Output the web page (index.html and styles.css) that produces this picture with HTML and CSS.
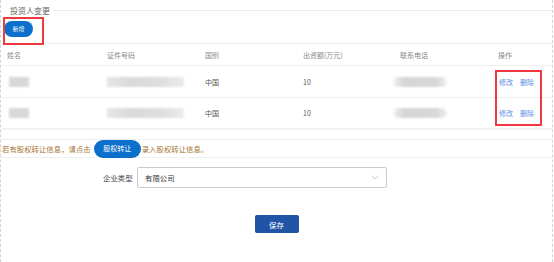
FILE: index.html
```html
<!DOCTYPE html>
<html lang="zh-CN">

<head>
    <meta charset="UTF-8">
    <meta name="viewport" content="width=device-width, initial-scale=1.0">
    <title>投资人变更</title>
    <link rel="stylesheet" href="styles.css">
</head>

<body>

    <div class="page">
        <!-- Legend -->
        <div class="legend-row">
            <span class="legend">投资人变更</span>
            <span class="legend-line"></span>
        </div>

        <div class="toolbar">
            <button class="btn-pill btn-add">新增</button>
            <span class="mark mark-add"></span>
        </div>

        <!-- Investor table -->
        <div class="table">
            <div class="tr th">
                <div>姓名</div>
                <div>证件号码</div>
                <div>国别</div>
                <div>出资额(万元)</div>
                <div>联系电话</div>
                <div>操作</div>
            </div>
            <div class="tr">
                <div><span class="blur blur-name"></span></div>
                <div><span class="blur blur-id"></span></div>
                <div>中国</div>
                <div>10</div>
                <div><span class="blur blur-phone"></span></div>
                <div class="ops"><a href="#">修改</a><a href="#">删除</a></div>
            </div>
            <div class="tr">
                <div><span class="blur blur-name"></span></div>
                <div><span class="blur blur-id"></span></div>
                <div>中国</div>
                <div>10</div>
                <div><span class="blur blur-phone"></span></div>
                <div class="ops"><a href="#">修改</a><a href="#">删除</a></div>
            </div>
            <span class="mark mark-ops"></span>
        </div>

        <div class="notice">
            若有股权转让信息，请点击<button class="btn-pill btn-transfer">股权转让</button>录入股权转让信息。
        </div>

        <div class="form-row">
            <label for="companyType">企业类型</label>
            <div class="select">
                <span>有限公司</span>
                <svg width="8" height="5" viewBox="0 0 8 5"><path d="M0.5 0.5 L4 4 L7.5 0.5" fill="none" stroke="#bbb" stroke-width="0.8"/></svg>
            </div>
        </div>

        <div class="actions">
            <button class="btn-save">保存</button>
        </div>
    </div>

</body>

</html>
```

FILE: styles.css
```css
/* Global */
* {
    margin: 0;
    padding: 0;
    box-sizing: border-box;
}

body {
    font-family: "Noto Sans CJK SC", "Noto Sans", sans-serif;
    background-color: #fff;
    color: #333;
}

.page {
    width: 553px;
    height: 262px;
    border-left: 1px dashed #d4d4d4;
    border-right: 1px dashed #d4d4d4;
}

/* Legend */
.legend-row {
    display: flex;
    align-items: center;
    height: 21px;
    padding-left: 9px;
}

.legend {
    font-size: 8px;
    color: #666;
    line-height: 1;
    margin-right: 3px;
}

.legend-line {
    flex: 1;
    height: 1px;
    background-color: #ececec;
}

/* Toolbar */
.toolbar {
    position: relative;
    display: flex;
    align-items: flex-start;
    height: 23px;
    padding-left: 3px;
    border-bottom: 1px solid #eee;
}

.btn-pill {
    border: none;
    background-color: #0b6fcc;
    color: #fff;
    font-family: inherit;
    line-height: 1;
    cursor: pointer;
}

.btn-add {
    width: 29px;
    height: 16px;
    border-radius: 8px;
    font-size: 6px;
}

.mark {
    position: absolute;
    border: 2px solid #ee3a3f;
}

.mark-add {
    left: 2px;
    top: -4px;
    width: 41px;
    height: 28px;
}

/* Table */
.table {
    position: relative;
}

.tr {
    display: grid;
    grid-template-columns: 100px 98px 98px 97px 98px 1fr;
    align-items: center;
    height: 32px;
    padding-left: 6px;
    border-bottom: 1px solid #efefef;
    font-size: 7px;
    color: #555;
}

.tr.th {
    height: 22px;
    color: #888;
}

.tr:last-of-type {
    height: 32px;
    border-bottom: 2px solid #f2f2f2;
}

.blur {
    display: block;
    height: 10px;
    background-color: #d8d8d8;
    filter: blur(1px);
}

.blur-name {
    width: 20px;
    margin-left: 2px;
}

.blur-id {
    width: 77px;
    background: linear-gradient(90deg, #e6e6e6, #d9d9d9 30%, #dedede 70%, #ececec);
}

.blur-phone {
    width: 54px;
    margin-left: -7px;
    border-radius: 5px;
    background: linear-gradient(90deg, #f2f2f2, #d6d6d6 20%, #d8d8d8 80%, #f0f0f0);
}

.ops {
    display: flex;
    gap: 7px;
    padding-left: 1px;
}

.ops a {
    color: #5b8de6;
    text-decoration: none;
}

.mark-ops {
    left: 494px;
    top: 26px;
    width: 47px;
    height: 56px;
}

/* Notice */
.notice {
    display: flex;
    align-items: center;
    height: 19px;
    margin-top: 9px;
    padding-left: 1px;
    border-top: 1px solid #efefef;
    border-bottom: 1px solid #efefef;
    font-size: 7.4px;
    color: #a87634;
}

.btn-transfer {
    width: 47px;
    height: 18px;
    border-radius: 9px;
    font-size: 7px;
    margin: 0 1px 0 3px;
}

/* Form */
.form-row {
    display: flex;
    align-items: center;
    margin-top: 9px;
    padding-left: 102px;
}

.form-row label {
    font-size: 7.4px;
    color: #444;
    width: 34px;
}

.select {
    display: flex;
    align-items: center;
    justify-content: space-between;
    width: 250px;
    height: 21px;
    padding: 0 7px;
    border: 1px solid #c9c9c9;
    border-radius: 2px;
    font-size: 7.4px;
    color: #333;
}

/* Save */
.actions {
    display: flex;
    justify-content: center;
    padding-top: 27px;
}

.btn-save {
    width: 44px;
    height: 18px;
    border: none;
    border-radius: 2px;
    background-color: #2153a6;
    color: #fff;
    font-family: inherit;
    font-size: 7.4px;
    cursor: pointer;
}
```
